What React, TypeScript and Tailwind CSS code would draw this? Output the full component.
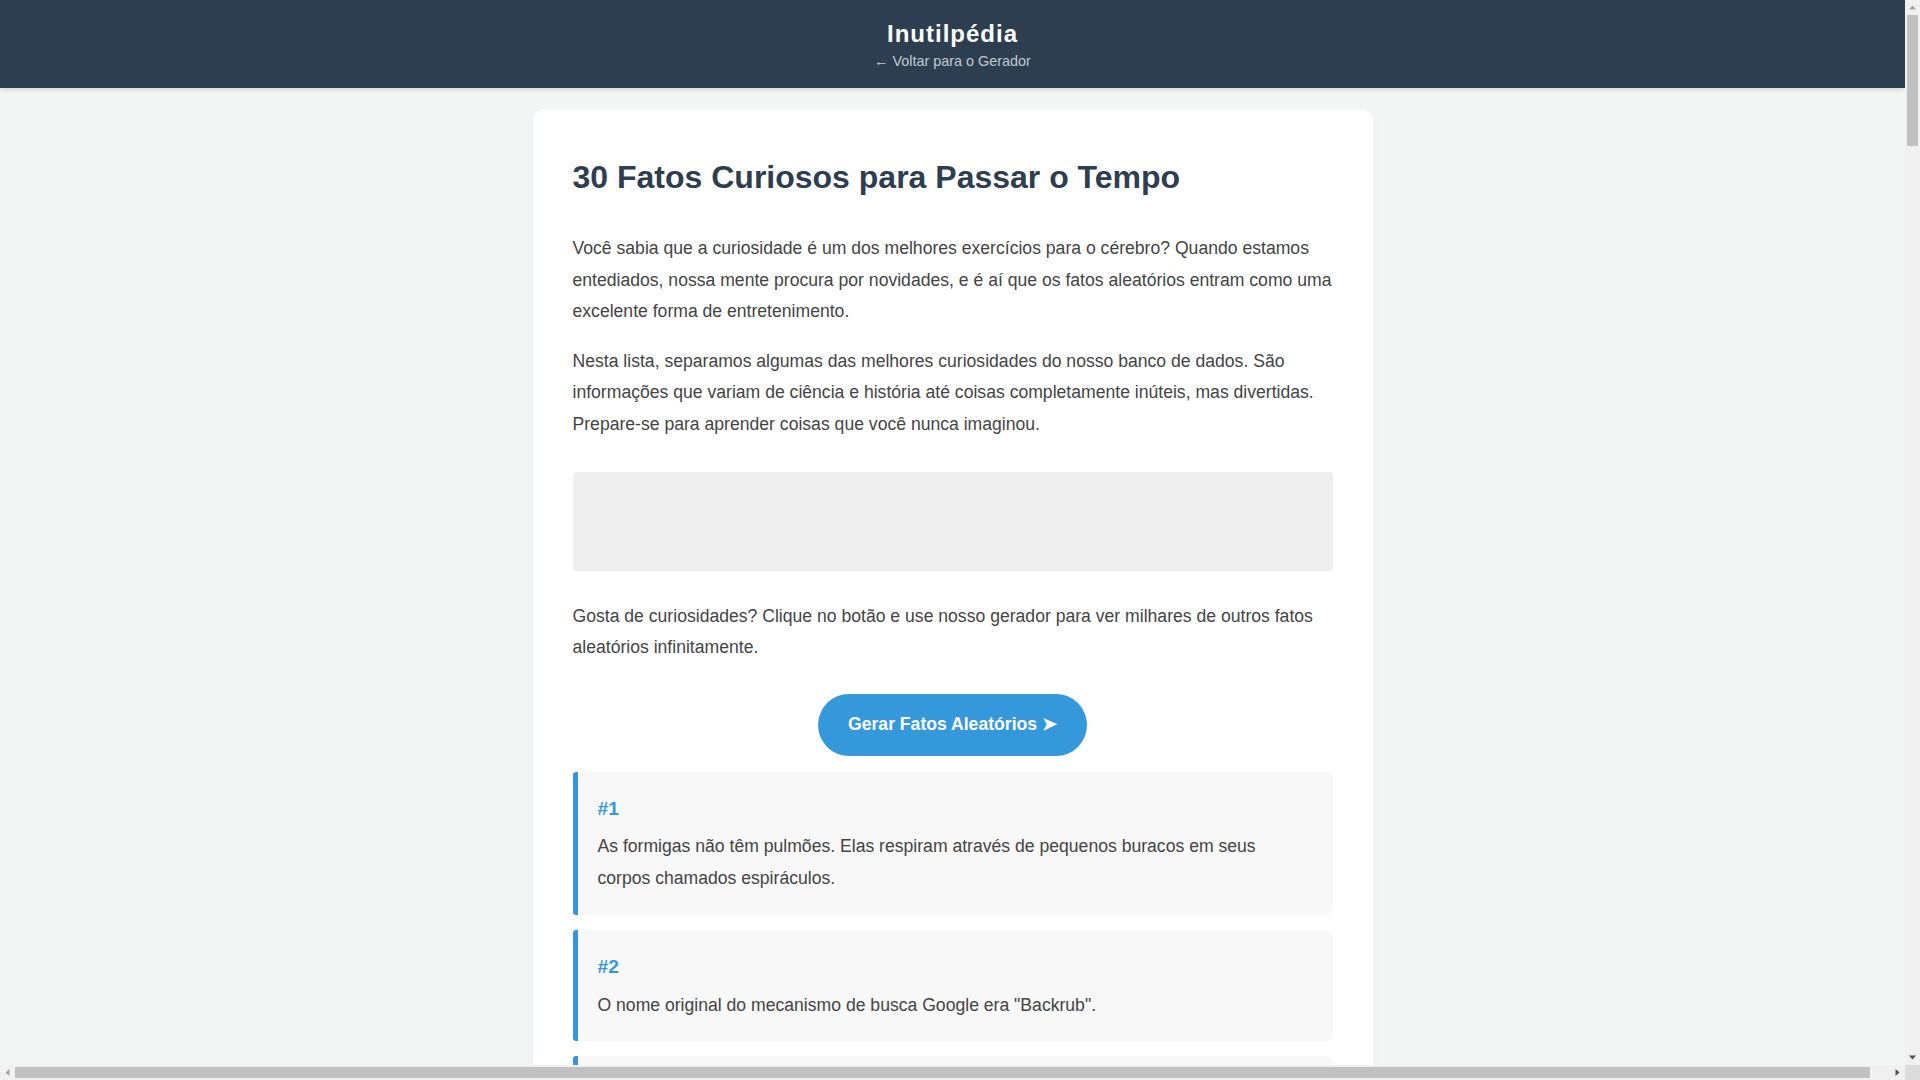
import React from "react";

const facts: string[] = [
  "As formigas não têm pulmões. Elas respiram através de pequenos buracos em seus corpos chamados espiráculos.",
  'O nome original do mecanismo de busca Google era "Backrub".',
  "O coração de um camarão fica localizado em sua cabeça.",
  "Os polvos têm três corações e sangue azul.",
  "O mel nunca estraga. Arqueólogos encontraram potes de mel em tumbas egípcias com mais de 3.000 anos ainda comestíveis.",
  "Uma nuvem pode pesar mais de um milhão de toneladas.",
  "Os flamingos nascem cinzentos e ficam cor-de-rosa por causa da alimentação rica em carotenoides.",
  "A Torre Eiffel pode ficar até 15 centímetros mais alta durante o verão por causa da dilatação do metal.",
  "Os cavalos-marinhos machos são os que ficam grávidos e dão à luz os filhotes.",
  "Bananas são levemente radioativas por conterem potássio-40.",
  "O olho de um avestruz é maior do que o seu cérebro.",
  "Vênus é o único planeta do Sistema Solar que gira no sentido horário.",
  "As vacas têm melhores amigas e ficam estressadas quando são separadas delas.",
  "O corpo humano contém ferro suficiente para fazer um prego de cerca de 7 centímetros.",
  "Os coalas dormem até 22 horas por dia.",
  "A língua de uma baleia-azul pode pesar tanto quanto um elefante.",
  "Um dia em Vênus é mais longo do que um ano em Vênus.",
  "As lontras-marinhas dão as mãos enquanto dormem para não se afastarem umas das outras.",
  "O Brasil é o país com a maior biodiversidade do planeta.",
  "Os tubarões existem há mais tempo do que as árvores.",
  "O som viaja cerca de quatro vezes mais rápido na água do que no ar.",
  "As impressões digitais dos coalas são tão parecidas com as humanas que podem confundir peritos.",
  "Os caracóis podem dormir por até três anos.",
  "A Grande Muralha da China não é visível do espaço a olho nu.",
  "As abelhas conseguem reconhecer rostos humanos.",
  "O DNA humano é cerca de 60% idêntico ao de uma banana.",
  "Os gatos passam cerca de 70% da vida dormindo.",
  "O Oceano Pacífico é maior do que toda a área de terra do planeta somada.",
  "As girafas dormem apenas de 10 minutos a 2 horas por dia.",
  'A palavra "saudade" é considerada uma das mais difíceis de traduzir para outras línguas.',
];

function Fact({ n, text }: { n: number; text: string }) {
  return (
    <div className="mb-[15px] rounded-l-[3px] rounded-r-[8px] border-l-[5px] border-[#3498db] bg-[#f8f8f8] p-[20px]">
      <div className="mb-[6.8px] text-[19.2px] font-bold leading-[33px] text-[#3498db]">#{n}</div>
      <p className="text-[17.6px] leading-[1.8] text-[#444]">{text}</p>
    </div>
  );
}

function Ad() {
  return <div className="my-[30px] h-[99px] rounded-[4px] bg-[#efefef]" />;
}

function Arrow({ dir, active }: { dir: "up" | "down" | "left" | "right"; active: boolean }) {
  const fill = active ? "#505050" : "#a3a3a3";
  const pts =
    dir === "up"
      ? "4,9.5 11,9.5 7.5,5.5"
      : dir === "down"
        ? "4,5.5 11,5.5 7.5,9.5"
        : dir === "left"
          ? "9.5,4 9.5,11 5.5,7.5"
          : "5.5,4 5.5,11 9.5,7.5";
  return (
    <div className="flex h-[15px] w-[15px] shrink-0 items-center justify-center">
      <svg width="15" height="15" viewBox="0 0 15 15">
        <polygon points={pts} fill={fill} />
      </svg>
    </div>
  );
}

function Page() {
  return (
    <div className="bg-[#f4f5f5] pb-[40px] font-['Liberation_Sans',Arial,sans-serif]">
      <header className="bg-[#2c3e50] pt-[15px] pb-[17px] text-center shadow-[0_2px_5px_rgba(0,0,0,0.12)]">
        <div className="text-[24px] font-bold leading-[37px] tracking-[1px] text-white">Inutilpédia</div>
        <a href="#" className="block text-[14.4px] leading-[19px] text-[#c3c9d0] no-underline">
          ← Voltar para o Gerador
        </a>
      </header>

      <main className="mx-auto mt-[21px] w-[840px] rounded-[12px] bg-white p-[40px] shadow-[0_2px_10px_rgba(0,0,0,0.04)]">
        <h1 className="mb-[26.5px] text-[32px] font-bold leading-[57.6px] text-[#2c3e50]">
          30 Fatos Curiosos para Passar o Tempo
        </h1>
        <p className="mb-[17.6px] text-[17.6px] leading-[1.8] text-[#444]">
          Você sabia que a curiosidade é um dos melhores exercícios para o cérebro? Quando estamos entediados, nossa
          mente procura por novidades, e é aí que os fatos aleatórios entram como uma excelente forma de entretenimento.
        </p>
        <p className="mb-[17.6px] text-[17.6px] leading-[1.8] text-[#444]">
          Nesta lista, separamos algumas das melhores curiosidades do nosso banco de dados. São informações que variam
          de ciência e história até coisas completamente inúteis, mas divertidas. Prepare-se para aprender coisas que
          você nunca imaginou.
        </p>

        <div className="mt-[31px] mb-[30px] h-[99px] rounded-[4px] bg-[#efefef]" />

        <p className="mb-[17.6px] text-[17.6px] leading-[1.8] text-[#444]">
          Gosta de curiosidades? Clique no botão e use nosso gerador para ver milhares de outros fatos aleatórios
          infinitamente.
        </p>

        <div className="mt-[30px] mb-[16px] flex justify-center">
          <a
            href="#"
            className="rounded-full bg-[#3498db] px-[30px] py-[15px] text-[17.6px] font-bold leading-[31.7px] text-white no-underline"
          >
            Gerar Fatos Aleatórios ➤
          </a>
        </div>

        <div>
          {facts.map((t, i) => (
            <React.Fragment key={i}>
              <Fact n={i + 1} text={t} />
              {(i + 1) % 3 === 0 && i < 29 ? <Ad /> : null}
            </React.Fragment>
          ))}
        </div>

        <Ad />

        <h2 className="mb-[16px] text-[24px] font-bold leading-[1.8] text-[#2c3e50]">Quer mais curiosidades?</h2>
        <p className="mb-[17.6px] text-[17.6px] leading-[1.8] text-[#444]">
          Esperamos que você tenha se divertido com esta lista. Todos os dias adicionamos novos fatos ao nosso banco de
          dados, então sempre haverá algo novo para descobrir.
        </p>
        <div className="mt-[30px] mb-[16px] flex justify-center">
          <a
            href="#"
            className="rounded-full bg-[#3498db] px-[30px] py-[15px] text-[17.6px] font-bold leading-[31.7px] text-white no-underline"
          >
            Gerar Fatos Aleatórios ➤
          </a>
        </div>
      </main>

      <footer className="mt-[40px] text-center text-[14.4px] leading-[1.8] text-[#7f8c8d]">
        © 2025 Inutilpédia — Fatos inúteis, mas divertidos.
      </footer>
    </div>
  );
}

export default function App() {
  return (
    <div className="flex h-screen w-screen flex-col overflow-hidden bg-[#f4f5f5]">
      <div className="flex min-h-0 flex-1">
        <div className="min-w-0 flex-1 overflow-hidden">
          <Page />
        </div>
        <div className="flex w-[15px] shrink-0 flex-col bg-[#f1f1f1]">
          <Arrow dir="up" active={false} />
          <div className="flex min-h-0 flex-1 flex-col px-[2px]">
            <div className="h-[131px] w-full bg-[#c1c1c1]" />
          </div>
          <Arrow dir="down" active={true} />
        </div>
      </div>
      <div className="flex h-[15px] shrink-0 bg-[#f1f1f1]">
        <Arrow dir="left" active={false} />
        <div className="flex min-w-0 flex-1 items-center py-[2px]">
          <div className="h-full w-[1855px] bg-[#c1c1c1]" />
        </div>
        <Arrow dir="right" active={true} />
        <div className="h-[15px] w-[15px] shrink-0 bg-[#dcdcdc]" />
      </div>
    </div>
  );
}
